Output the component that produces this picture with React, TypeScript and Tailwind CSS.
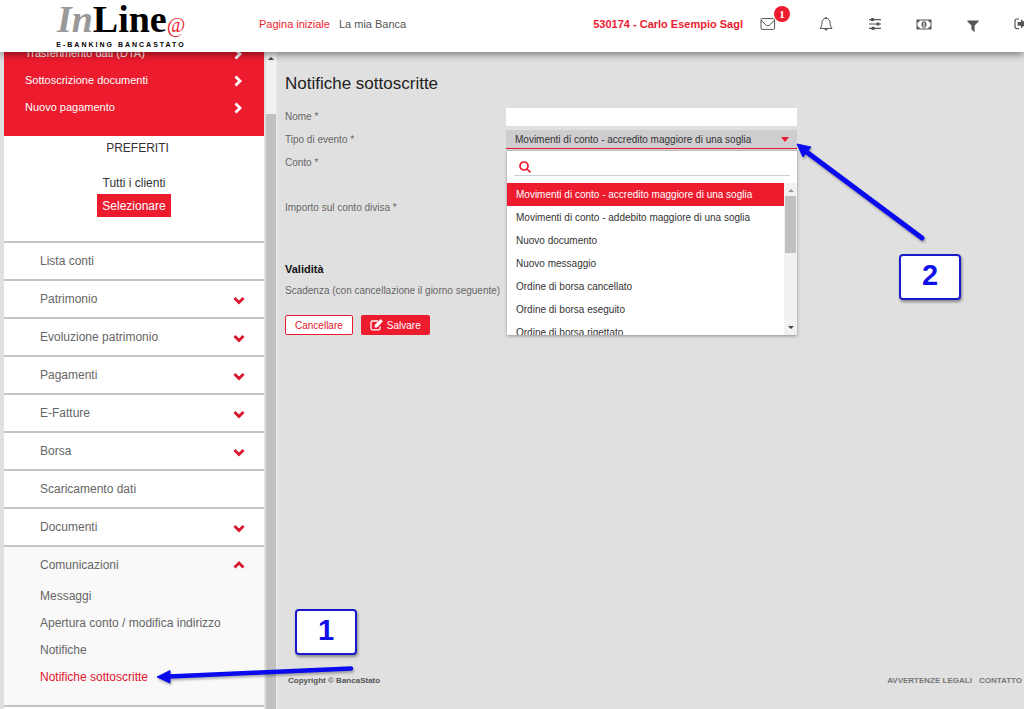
import { ReactNode } from 'react';

const quickLinks = ['Trasferimento dati (DTA)', 'Sottoscrizione documenti', 'Nuovo pagamento'];

const menu = [
    { label: 'Lista conti', expandable: false },
    { label: 'Patrimonio', expandable: true },
    { label: 'Evoluzione patrimonio', expandable: true },
    { label: 'Pagamenti', expandable: true },
    { label: 'E-Fatture', expandable: true },
    { label: 'Borsa', expandable: true },
    { label: 'Scaricamento dati', expandable: false },
    { label: 'Documenti', expandable: true },
];

const communications = ['Messaggi', 'Apertura conto / modifica indirizzo', 'Notifiche', 'Notifiche sottoscritte'];

const events = [
    'Movimenti di conto - accredito maggiore di una soglia',
    'Movimenti di conto - addebito maggiore di una soglia',
    'Nuovo documento',
    'Nuovo messaggio',
    'Ordine di borsa cancellato',
    'Ordine di borsa eseguito',
    'Ordine di borsa rigettato',
];

function Chevron({ direction }: { direction: 'up' | 'down' | 'right' }) {
    const points = {
        up: '1.5,8.5 6,4 10.5,8.5',
        down: '1.5,4 6,8.5 10.5,4',
        right: '3.5,1.5 8,6 3.5,10.5',
    };
    return (
        <svg className="size-3" viewBox="0 0 12 12" fill="none" stroke="currentColor" strokeWidth="2.8" aria-hidden="true">
            <polyline points={points[direction]} />
        </svg>
    );
}

function Logo() {
    return (
        <a href="#" className="block w-[132px] shrink-0 text-center">
            <span className="block font-['Liberation_Serif',serif] text-[38px] leading-10 font-bold whitespace-nowrap text-black">
                <span className="text-[#999] italic">In</span>
                Line
                <span className="text-xl leading-8 font-normal text-[#ed1b2e] italic">@</span>
            </span>
            <span className="block text-[7px] leading-2 font-bold tracking-[2px] whitespace-nowrap text-black">E-BANKING BANCASTATO</span>
        </a>
    );
}

function HeaderButton({ label, children }: { label: string; children: ReactNode }) {
    return (
        <button type="button" aria-label={label} className="relative flex w-4 shrink-0 justify-center text-[#555]">
            {children}
        </button>
    );
}

function Header() {
    return (
        <header className="relative z-10 flex h-[52px] shrink-0 items-center overflow-hidden bg-white pb-1 pl-[55px] text-[11px] shadow-[0_2px_8px_rgba(0,0,0,0.5)]">
            <Logo />
            <nav className="ml-[72px] flex shrink-0 gap-[9px]">
                <a href="#" className="text-[#ed1b2e]">Pagina iniziale</a>
                <a href="#" className="text-[#555]">La mia Banca</a>
            </nav>
            <span className="ml-auto shrink-0 font-bold text-[#ed1b2e]">530174 - Carlo Esempio Sagl</span>
            <div className="ml-[17px] shrink-0">
                <HeaderButton label="Messaggi">
                    <svg className="h-3 w-4 shrink-0" viewBox="0 0 16 12" fill="none" stroke="currentColor">
                        <rect x="1" y="0.6" width="13.6" height="10.8" rx="1" />
                        <path d="M1 2.2 L6.4 7.4 Q7.8 8.4 9.2 7.4 L14.6 2.2" />
                    </svg>
                    <span className="absolute -top-3 left-[14px] size-4 rounded-full bg-[#ed1b2e] text-center font-['Liberation_Serif',serif] text-[11px] leading-4 font-bold text-white">1</span>
                </HeaderButton>
            </div>
            <div className="-mr-[6px] ml-[42px] flex shrink-0 items-center gap-[33px]">
                <HeaderButton label="Avvisi">
                    <svg className="h-4 w-4" viewBox="0 0 16 16" fill="none" stroke="currentColor">
                        <path d="M8 2.2 C4.8 2.4 4 4.8 4 7 C4 9.4 3.2 10.8 1.9 12.4 H14.1 C12.8 10.8 12 9.4 12 7 C12 4.8 11.2 2.4 8 2.2 Z" />
                        <path d="M8 1 V2.2" strokeWidth="1.6" />
                        <path d="M6.2 12.8 Q6.4 14.3 8 14.4 Q9.6 14.3 9.8 12.8 Z" fill="currentColor" stroke="none" />
                    </svg>
                </HeaderButton>
                <HeaderButton label="Impostazioni">
                    <svg className="h-3 w-4" viewBox="0 0 16 12" fill="currentColor">
                        <path d="M2 1h12v1.2H2zM2 5.4h12v1.2H2zM2 9.8h12v1.2H2z" />
                        <rect x="4" y="0" width="3" height="3.2" rx="0.6" />
                        <rect x="9.4" y="4.4" width="3" height="3.2" rx="0.6" />
                        <rect x="4.6" y="8.8" width="3" height="3.2" rx="0.6" />
                    </svg>
                </HeaderButton>
                <HeaderButton label="Pagamenti">
                    <svg className="h-[11px] w-4" viewBox="0 0 16 11">
                        <rect x="0.5" y="0.5" width="15" height="10" rx="0.6" fill="currentColor" />
                        <path d="M3.6 1.5 H12.4 A2 2 0 0 0 14.5 3.6 V7.4 A2 2 0 0 0 12.4 9.5 H3.6 A2 2 0 0 0 1.5 7.4 V3.6 A2 2 0 0 0 3.6 1.5 Z" fill="#fff" />
                        <ellipse cx="8" cy="5.5" rx="2.4" ry="3.2" fill="currentColor" />
                        <path d="M7 4.2 L7.8 3.3 H8.6 V6.8 H9.2 V7.6 H6.8 V6.8 H7.5 V4.6 L7.3 4.8 Z" fill="#fff" />
                    </svg>
                </HeaderButton>
                <HeaderButton label="Filtro">
                    <svg className="mt-1 h-3 w-3" viewBox="0 0 12 12" fill="currentColor">
                        <path d="M0.6 0.6 H11.4 Q12 1 11.6 1.6 L7.6 5.6 V11.4 Q7.4 12 6.8 11.7 L4.6 9.6 Q4.4 9.4 4.4 9 V5.6 L0.4 1.6 Q0 1 0.6 0.6 Z" />
                    </svg>
                </HeaderButton>
                <HeaderButton label="Uscita">
                    <svg className="h-3 w-4" viewBox="0 0 16 12">
                        <path d="M5 1 H3 Q1 1 1 3 V8.6 Q1 10.600 3 10.600 H5" fill="none" stroke="currentColor" strokeWidth="1.2" />
                        <path d="M3.600 4 H7 V1.2 L12.400 5.800 L7 10.400 V7.800 H3.600 Z" fill="currentColor" />
                    </svg>
                </HeaderButton>
            </div>
        </header>
    );
}

function Sidebar() {
    return (
        <aside className="ml-1 flex w-[273px] shrink-0 gap-[2px] overflow-hidden border-r border-[#ececec] bg-[#e0e0e0]">
            <div className="min-w-0 flex-1 bg-white">
                <ul className="-mt-3 bg-[#ed1b2e] pr-5 pb-[15px] pl-[21px] text-[11px] text-white">
                    {quickLinks.map((label) => (
                        <li key={label}>
                            <a href="#" className="flex h-[27px] items-center justify-between">
                                {label}
                                <Chevron direction="right" />
                            </a>
                        </li>
                    ))}
                </ul>
                <div className="flex h-[105px] flex-col items-center pt-1 text-xs text-[#333]">
                    <h2 className="pl-[7px]">PREFERITI</h2>
                    <span className="mt-[19px]">Tutti i clienti</span>
                    <button type="button" className="mt-[3px] h-[23px] bg-[#ed1b2e] px-[5px] text-white">Selezionare</button>
                </div>
                <nav className="text-xs text-[#666]">
                    {menu.map((item) => (
                        <a key={item.label} href="#" className="flex h-[38px] items-center justify-between border-t-2 border-[#c4c4c4] pr-[19px] pl-9">
                            {item.label}
                            {item.expandable && <span className="pt-px text-[#d9152c]"><Chevron direction="down" /></span>}
                        </a>
                    ))}
                    <div className="border-y-2 border-[#c4c4c4] bg-[#f9f9f9] pb-[15px]">
                        <a href="#" className="flex h-[35px] items-center justify-between pr-[19px] pl-9">
                            Comunicazioni
                            <span className="pt-px text-[#d9152c]"><Chevron direction="up" /></span>
                        </a>
                        {communications.map((label) => (
                            <a
                                key={label}
                                href="#"
                                className={`flex h-[27px] items-center pl-9 ${label === 'Notifiche sottoscritte' ? 'text-[#e0152c]' : ''}`}
                            >
                                {label}
                            </a>
                        ))}
                    </div>
                </nav>
            </div>
            <div className="flex w-[10px] flex-col items-center bg-[#f1f1f1]">
                <svg className="mt-1 h-[5px] w-[6px] shrink-0" viewBox="0 0 6 5" fill="#444"><path d="M0 4 L3 1 L6 4 Z" /></svg>
                <div className="mt-[53px] w-full flex-1 bg-[#c1c1c1]" />
            </div>
        </aside>
    );
}

function EventList() {
    return (
        <div className="absolute top-5 right-0 left-px border-t border-[#bbb] bg-white shadow-[0_1px_3px_rgba(0,0,0,0.35)]">
            <div className="px-[7px] pt-2 pb-[7px]">
                <label className="flex h-[17px] items-center border-b border-[#c8d2d2] pl-[5px]">
                    <svg className="size-3 shrink-0" viewBox="0 0 12 12" fill="none" stroke="#ed1b2e" strokeWidth="1.7" aria-hidden="true">
                        <circle cx="5" cy="5" r="4" />
                        <path d="M8 8 L11.4 11.4" />
                    </svg>
                    <input type="text" aria-label="Cerca" className="min-w-0 flex-1 px-1 outline-none" />
                </label>
            </div>
            <div className="flex h-[152px] overflow-hidden">
                <ul role="listbox" aria-label="Tipo di evento" className="flex-1 text-[#333]">
                    {events.map((event, index) => (
                        <li
                            key={event}
                            role="option"
                            aria-selected={index === 0}
                            className={`flex h-[23px] items-center pl-[9px] ${index === 0 ? 'bg-[#ed1b2e] text-white' : ''}`}
                        >
                            {event}
                        </li>
                    ))}
                </ul>
                <div className="flex w-[13px] flex-col items-center justify-between bg-[#f1f1f1] px-[1px] py-[5px]">
                    <svg className="h-1 w-[6px] shrink-0" viewBox="0 0 6 4" fill="#999"><path d="M0 4 L3 1 L6 4 Z" /></svg>
                    <div className="mt-1 mb-auto h-[57px] w-full bg-[#c1c1c1]" />
                    <svg className="h-1 w-[6px] shrink-0" viewBox="0 0 6 4" fill="#444"><path d="M0 0 L3 3 L6 0 Z" /></svg>
                </div>
            </div>
        </div>
    );
}

function NotificationForm() {
    return (
        <form className="max-w-[512px] text-[10px] text-[#666]">
            <h1 className="text-[17px] leading-6 text-[#222]">Notifiche sottoscritte</h1>
            <div className="mt-[9px] grid grid-cols-[221px_1fr] items-center">
                <label htmlFor="name" className="leading-[23px]">Nome *</label>
                <input id="name" type="text" className="h-[18px] w-full bg-white px-2 outline-none" />
                <label htmlFor="event" className="leading-[23px]">Tipo di evento *</label>
                <div className="relative border-b border-[#ed1b2e]">
                    <select id="event" className="block h-[18px] w-full appearance-none bg-[#cfcdd0] pl-[9px] text-[#333] outline-none">
                        {events.map((event) => (
                            <option key={event}>{event}</option>
                        ))}
                    </select>
                    <svg className="pointer-events-none absolute top-[7px] right-2 h-[5px] w-2" viewBox="0 0 8 5" fill="#ed1b2e"><path d="M0 0 H8 L4 5 Z" /></svg>
                    <EventList />
                </div>
                <span className="leading-[23px]">Conto *</span>
            </div>
            <p className="mt-[22px] leading-[23px]">Importo sul conto divisa *</p>
            <h2 className="mt-[42px] text-[11px] leading-4 font-bold text-[#111]">Validità</h2>
            <p className="mt-[6px] leading-4">Scadenza (con cancellazione il giorno seguente)</p>
            <div className="mt-4 flex gap-2">
                <button type="button" className="h-5 rounded-[2px] border border-[#ed1b2e] bg-white px-[9px] text-[#e0152c]">Cancellare</button>
                <button type="button" className="flex h-5 items-center gap-[4px] rounded-[2px] bg-[#ed1b2e] px-[9px] text-white">
                    <svg className="h-3 w-[13px]" viewBox="0 0 13 12" aria-hidden="true">
                        <path d="M8 2 H2.6 Q1 2 1 3.6 V9.200 Q1 10.800 2.600 10.800 H8.400 Q10 10.800 10 9.200 V7.600" fill="none" stroke="currentColor" strokeWidth="1.3" />
                        <path d="M4.600 8.400 V6 L10.200 0.500 Q10.600 0.200 11 0.500 L12.500 2 Q12.800 2.400 12.500 2.800 L7 8.400 Z" fill="currentColor" />
                    </svg>
                    Salvare
                </button>
            </div>
        </form>
    );
}

function Callout({ children }: { children: ReactNode }) {
    return (
        <div className="flex h-[46px] w-[62px] items-center justify-center rounded-[4px] border-2 border-[#1a1acc] bg-white pb-[2px] text-[29px] font-bold text-[#1010e8] shadow-[1px_2px_3px_rgba(0,0,0,0.4)]">
            {children}
        </div>
    );
}

// Numbered steps with arrows, drawn over the page
function Annotations() {
    return (
        <div className="pointer-events-none absolute inset-0 z-20">
            <svg className="absolute top-0 left-0 h-[709px] w-[1024px] drop-shadow-[1px_2px_1px_rgba(0,0,0,0.3)]" viewBox="0 0 1024 709" stroke="#0a0aee" fill="#0a0aee" aria-hidden="true">
                <path d="M922 238 L808 153" strokeWidth="5" strokeLinecap="round" />
                <path d="M797 144 L811 147 L803 157 Z" />
                <path d="M351 668.5 L169 676.5" strokeWidth="4.5" strokeLinecap="round" />
                <path d="M157 677 L170 670.500 L170 683 Z" />
            </svg>
            <div className="absolute top-[254px] left-[899px]"><Callout>2</Callout></div>
            <div className="absolute top-[609px] left-[295px]"><Callout>1</Callout></div>
        </div>
    );
}

export default function App() {
    return (
        <div className="relative flex h-screen flex-col overflow-hidden bg-[#e0e0e0] font-['Liberation_Sans',Arial,sans-serif]">
            <Header />
            <div className="flex min-h-0 flex-1">
                <Sidebar />
                <main className="flex min-w-0 flex-1 flex-col justify-between pt-5 pl-2">
                    <NotificationForm />
                    <footer className="flex justify-between pr-[2px] pb-[22px] pl-[3px] text-[8px] leading-3 font-bold text-[#777]">
                        <span className="text-[#555]">Copyright © BancaStato</span>
                        <div className="flex gap-[7px]">
                            <a href="#">AVVERTENZE LEGALI</a>
                            <a href="#">CONTATTO</a>
                        </div>
                    </footer>
                </main>
            </div>
            <Annotations />
        </div>
    );
}
